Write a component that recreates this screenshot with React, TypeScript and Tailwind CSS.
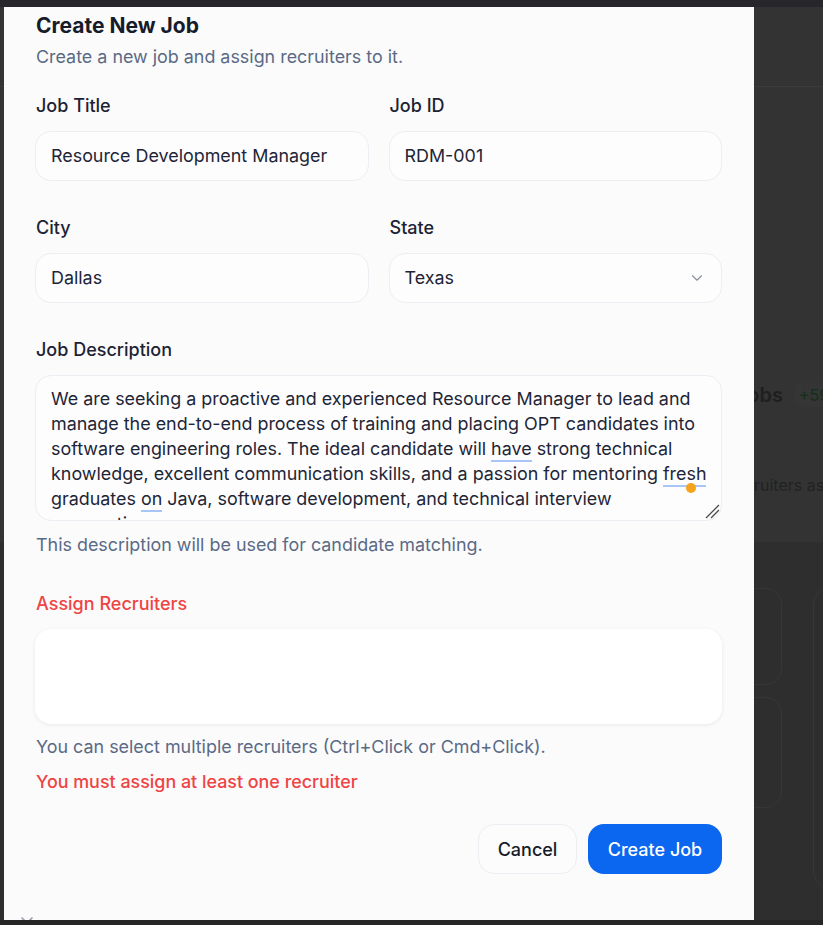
import { ChevronDown, X } from "lucide-react";

const description = [
  "We are seeking a proactive and experienced Resource Manager to lead and",
  "manage the end-to-end process of training and placing OPT candidates into",
  "software engineering roles. The ideal candidate will {have} strong technical",
  "knowledge, excellent communication skills, and a passion for mentoring {fresh}",
  "graduates {on} Java, software development, and technical interview",
  "preparation.",
];

function Line({ text }: { text: string }) {
  const parts = text.split(/(\{[^}]+\})/);
  return (
    <div className="whitespace-nowrap">
      {parts.map((p, i) =>
        p.startsWith("{") ? (
          <span key={i} className="border-b-2 border-[#a9c5f7] pb-[1px]">
            {p.slice(1, -1)}
          </span>
        ) : (
          <span key={i}>{p}</span>
        ),
      )}
    </div>
  );
}

function Field({
  label,
  value,
  select,
}: {
  label: string;
  value: string;
  select?: boolean;
}) {
  return (
    <div className="flex flex-col">
      <label className="mb-[13px] h-6 text-[18px] font-medium leading-6 text-[#1d2333]">
        {label}
      </label>
      <div className="-ml-px flex h-[50px] items-center justify-between rounded-2xl border border-[#eceef3] bg-[#fdfdfe] px-[15px] text-[17.9px] text-[#1e2536]">
        <span>{value}</span>
        {select && (
          <ChevronDown size={18} strokeWidth={1.5} className="text-[#8a8f99]" />
        )}
      </div>
    </div>
  );
}

export default function App() {
  return (
    <div className="relative flex h-[925px] w-[823px] flex-col overflow-hidden bg-[#333333] font-['Inter',sans-serif]">
      <div className="h-[7px] shrink-0 bg-[#27272b]" />
      <main className="flex flex-1 flex-col">
        <div className="h-[80px] shrink-0 border-b border-[#3b3b3b]" />
        <div className="flex h-[455px] shrink-0 flex-col">
          <div className="mt-[293px] flex items-center">
            <span className="w-[783px] shrink-0 text-right text-[20px] font-semibold text-[#1f1f1f]">
              Active Jobs
            </span>
            <span className="ml-[12px] shrink-0 rounded-md bg-[#343534] px-1 text-[16px] text-[#12301a]">
              +59%
            </span>
          </div>
          <div className="mt-[63px] flex text-[16px] text-[#222222]">
            <span className="w-[754px] shrink-0 text-right">Rec</span>
            <span className="shrink-0">ruiters assigned</span>
          </div>
        </div>
        <div className="flex flex-1 flex-col bg-[#2e2e2e]">
          <div className="flex gap-[31px] pl-[700px] pt-[46px]">
            <div className="flex w-[82px] shrink-0 flex-col gap-3">
              <div className="h-[97px] rounded-2xl border border-[#363636]" />
              <div className="h-[111px] rounded-2xl border border-[#363636]" />
            </div>
            <div className="h-[300px] w-[40px] shrink-0 rounded-2xl border border-[#363636]" />
          </div>
        </div>
      </main>
      <div className="h-[5px] shrink-0 bg-[#262626]" />

      <div className="absolute left-[4px] top-[7px] h-[913px] w-[750px] overflow-hidden bg-[#fbfbfc] px-8 pt-[5px]">
        <h2 className="text-[21px] font-bold leading-7 text-[#171c2b]">
          Create New Job
        </h2>
        <p className="mt-[5px] text-[17.9px] leading-6 text-[#5a6a85]">
          Create a new job and assign recruiters to it.
        </p>

        <div className="mt-[25px] grid grid-cols-2 gap-x-[21px] gap-y-[35px]">
          <Field label="Job Title" value="Resource Development Manager" />
          <Field label="Job ID" value="RDM-001" />
          <Field label="City" value="Dallas" />
          <Field label="State" value="Texas" select />
        </div>

        <div className="mt-[35px] flex flex-col">
          <label className="mb-[13px] h-6 text-[18px] font-medium leading-6 text-[#1d2333]">
            Job Description
          </label>
          <div className="relative -ml-px h-[146px] overflow-hidden rounded-2xl border border-[#eceef3] bg-[#fdfdfe] px-[15px] pt-[10px] text-[17.9px] leading-[25px] text-[#1e2536]">
            {description.map((l, i) => (
              <Line key={i} text={l} />
            ))}
            <span className="absolute left-[650px] top-[107px] h-[10px] w-[10px] rounded-full bg-[#f6a21b]" />
            <svg
              className="absolute bottom-[1px] right-[1px]"
              width="18"
              height="18"
              viewBox="0 0 18 18"
            >
              <path
                d="M17 4 L4 17 M17 9 L9 17 M17 14 L14 17"
                stroke="#4b4b4b"
                strokeWidth="1.3"
              />
            </svg>
          </div>
          <p className="mt-[12px] text-[17.9px] leading-6 text-[#5a6a85]">
            This description will be used for candidate matching.
          </p>
        </div>

        <div className="mt-[35px] flex flex-col">
          <label className="mb-[13px] h-6 text-[18px] font-medium leading-6 text-[#ef4444]">
            Assign Recruiters
          </label>
          <div className="-ml-px h-[95px] rounded-2xl bg-white shadow-[0_1px_4px_rgba(15,23,42,0.08)]" />
          <p className="mt-[11px] text-[17.9px] leading-6 text-[#5a6a85]">
            You can select multiple recruiters (Ctrl+Click or Cmd+Click).
          </p>
          <p className="mt-[11px] text-[17.9px] font-medium leading-6 text-[#ef4444]">
            You must assign at least one recruiter
          </p>
        </div>

        <div className="mt-[30px] flex justify-end gap-[11px]">
          <button className="h-[50px] w-[99px] rounded-2xl border border-[#eceef3] bg-[#fcfcfd] text-[18px] font-medium text-[#161b26]">
            Cancel
          </button>
          <button className="h-[50px] w-[134px] rounded-2xl bg-[#0b66f0] text-[18px] font-medium text-white">
            Create Job
          </button>
        </div>

        <X size={20} className="mt-[39px] -ml-[19px] text-[#9aa0ab]" />
      </div>
    </div>
  );
}
